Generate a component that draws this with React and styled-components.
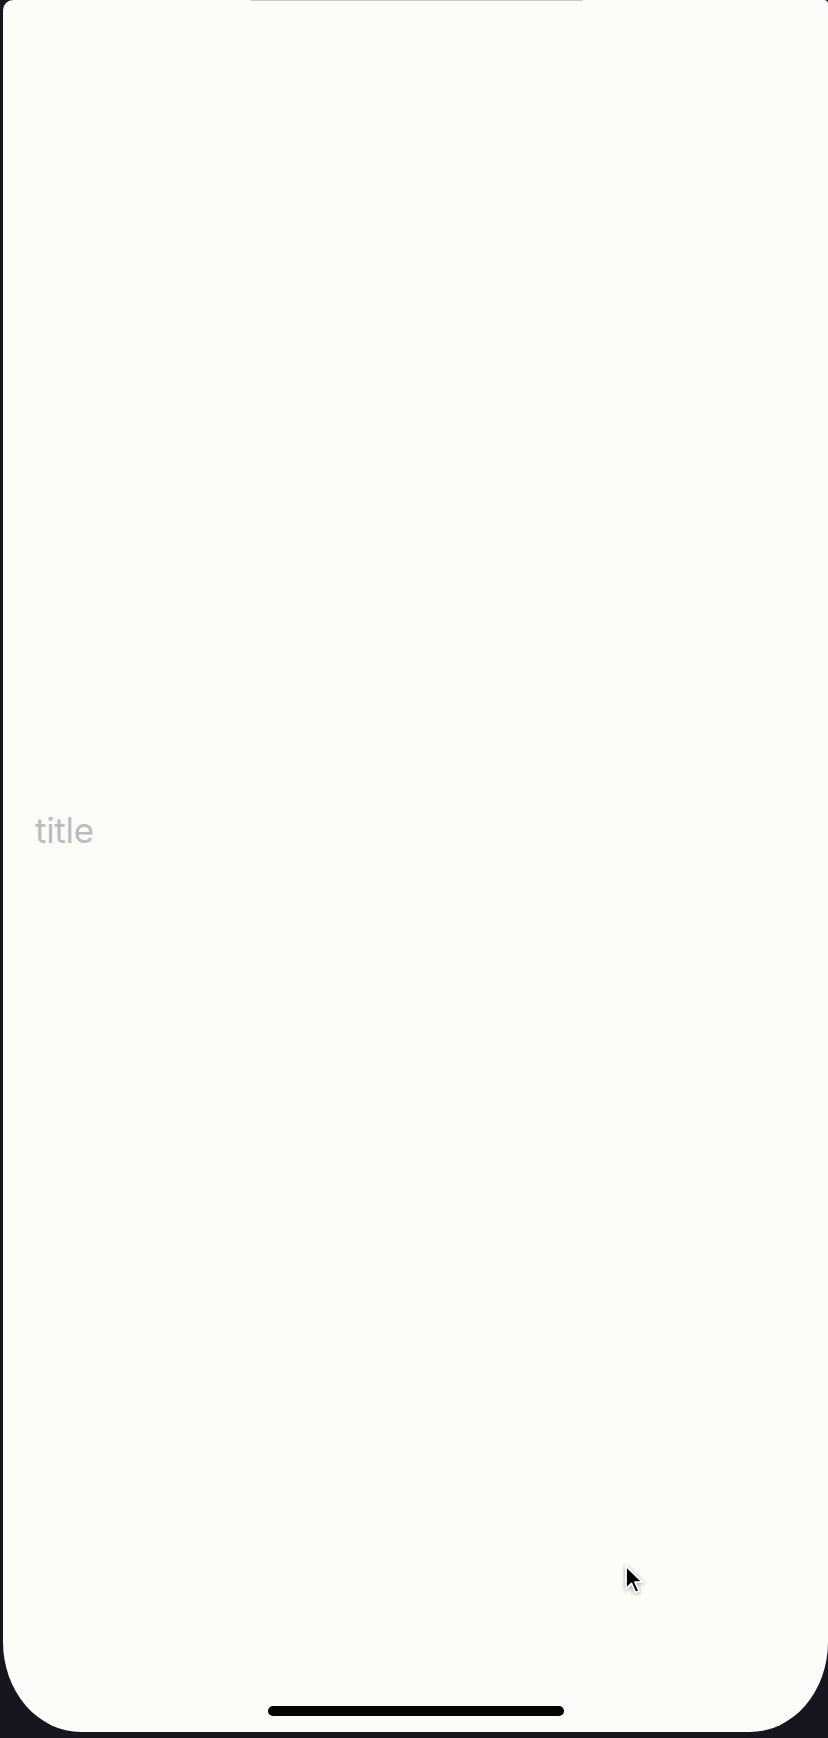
import React from 'react'
import styled, { createGlobalStyle } from 'styled-components'

const GlobalStyle = createGlobalStyle`
  html, body {
    margin: 0;
    padding: 0;
    background: #16161f;
  }
  * {
    box-sizing: border-box;
  }
`

const Frame = styled.div`
  width: 828px;
  height: 1738px;
  background: #16161f;
  padding: 0 0 6px 3px;
  overflow: hidden;
`

const Screen = styled.div`
  position: relative;
  height: 100%;
  background: #fcfcf9;
  border-radius: 10px 4px 78px 78px / 10px 4px 90px 90px;
  display: flex;
  flex-direction: column;
  font-family: Inter, "Liberation Sans", sans-serif;
`

const TopLine = styled.div`
  align-self: center;
  width: 332px;
  height: 1px;
  margin-left: 2px;
  background: #c9c9c9;
`

const Title = styled.div`
  margin: 808px 0 0 32px;
  font-size: 35px;
  line-height: 42px;
  font-weight: 400;
  color: #bcbcc0;
  letter-spacing: -0.3px;
`

const HomeIndicator = styled.div`
  align-self: center;
  width: 296px;
  height: 10px;
  margin: auto 0 16px 0;
  border-radius: 5px;
  background: #050505;
`

const Cursor = styled.svg`
  position: absolute;
  left: 618px;
  top: 1563px;
  width: 24px;
  height: 34px;
  filter: drop-shadow(0 1px 2px rgba(0, 0, 0, 0.35));
`

function App() {
  return (
    <>
      <GlobalStyle />
      <Frame>
        <Screen>
          <TopLine />
          <Title>title</Title>
          <HomeIndicator />
          <Cursor viewBox="0 0 24 34">
            <path
              d="M5 3 L5 26 L10.5 20.5 L14.5 29.5 L18 28 L14 19.2 L21.5 19.2 Z"
              fill="#000"
              stroke="#fff"
              strokeWidth="1.8"
              strokeLinejoin="round"
            />
          </Cursor>
        </Screen>
      </Frame>
    </>
  )
}

export default App
